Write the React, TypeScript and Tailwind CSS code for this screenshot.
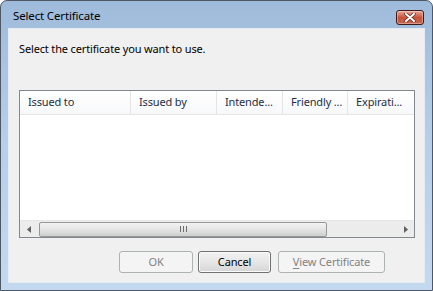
import React from "react";

const font = { fontFamily: '"Noto Sans", "Open Sans", sans-serif', letterSpacing: "-0.15px" };

const columns = [
  { label: "Issued to", w: "w-[111px]" },
  { label: "Issued by", w: "w-[86px]" },
  { label: "Intende...", w: "w-[66px]" },
  { label: "Friendly ...", w: "w-[65px]" },
  { label: "Expirati...", w: "flex-1" },
];

function CloseButton() {
  return (
    <div className="w-[28px] h-[15px] rounded-[3px] border border-[#3f1a1a] bg-gradient-to-b from-[#e9a99a] via-[#c8523b] to-[#c4664f] flex items-center justify-center shadow-[inset_0_0_0_1px_rgba(255,255,255,0.35)]">
      <svg width="12" height="9" viewBox="0 0 12 9">
        <path d="M2 1 L10 8 M10 1 L2 8" stroke="#5a2a24" strokeWidth="3.4" strokeLinecap="round" />
        <path d="M2 1 L10 8 M10 1 L2 8" stroke="#ffffff" strokeWidth="2" strokeLinecap="round" />
      </svg>
    </div>
  );
}

function Button({ label, w, disabled, focus }: { label: React.ReactNode; w: string; disabled?: boolean; focus?: boolean }) {
  return (
    <div
      className={`${w} h-[22px] rounded-[3px] border flex items-center justify-center text-[11px] ${
        disabled
          ? "border-[#adb2b5] bg-[#f4f4f4] text-[#838383]"
          : focus
          ? "border-[#707070] bg-gradient-to-b from-[#f2f2f2] via-[#e6e6e6] to-[#d6d6d6] text-black shadow-[inset_0_0_0_1px_#fbfbfb]"
          : "border-[#707070] bg-[#e8e8e8] text-black"
      }`}
    >
      {label}
    </div>
  );
}

export default function App() {
  return (
    <div
      className="w-[433px] h-[291px] rounded-t-[7px] border border-[#4d5766] bg-gradient-to-b from-[#9fbbdb] via-[#b7cfe9] to-[#c3d9ef] flex flex-col px-[7px] pb-[7px]"
      style={font}
    >
      {/* title bar */}
      <div className="h-[27px] flex items-start justify-between">
        <span className="pl-[5px] pt-[7px] text-[11.5px] text-black leading-[16px]">Select Certificate</span>
        <div className="pt-[9px] pr-[1px]">
          <CloseButton />
        </div>
      </div>

      {/* client area */}
      <div className="flex-1 bg-[#f0f0f0] border border-[#e4ebf3] px-[10px] flex flex-col">
        <p className="mt-[12px] text-[11px] leading-[16px] text-black">Select the certificate you want to use.</p>

        {/* list view */}
        <div className="mt-[33px] h-[148px] w-[396px] border border-[#828790] bg-white flex flex-col">
          <div className="h-[24px] flex bg-gradient-to-b from-white to-[#f7f8fa] border-b border-[#e5e5e5]">
            {columns.map((c) => (
              <div
                key={c.label}
                className={`${c.w} flex items-center pl-[8px] border-r border-[#e5e5e5] text-[11px] text-[#1e2f45] whitespace-nowrap overflow-hidden last:border-r-0`}
              >
                {c.label}
              </div>
            ))}
          </div>
          <div className="flex-1" />
          {/* horizontal scrollbar */}
          <div className="h-[17px] flex items-center bg-[#ececec] border-t border-[#e6e6e6]">
            <div className="w-[17px] h-full flex items-center justify-center">
              <svg width="4" height="7" viewBox="0 0 4 7">
                <path d="M4 0 L0 3.5 L4 7 Z" fill="#606060" />
              </svg>
            </div>
            <div className="ml-[2px] w-[288px] h-[15px] rounded-[2px] border border-[#979797] bg-gradient-to-b from-[#f3f3f3] via-[#e4e4e4] to-[#cfcfcf] flex items-center justify-center">
              <svg width="7" height="6" viewBox="0 0 7 6">
                <path d="M0.5 0 V6 M3.5 0 V6 M6.5 0 V6" stroke="#6c6c6c" strokeWidth="1" />
              </svg>
            </div>
            <div className="flex-1" />
            <div className="w-[17px] h-full flex items-center justify-center">
              <svg width="4" height="7" viewBox="0 0 4 7">
                <path d="M0 0 L4 3.5 L0 7 Z" fill="#606060" />
              </svg>
            </div>
          </div>
        </div>

        {/* buttons */}
        <div className="mt-[13px] flex pl-[100px]">
          <Button label="OK" w="w-[74px]" disabled />
          <div className="w-[5px]" />
          <Button label="Cancel" w="w-[73px]" focus />
          <div className="w-[7px]" />
          <Button
            label={
              <span>
                <span className="underline underline-offset-2">V</span>iew Certificate
              </span>
            }
            w="w-[107px]"
            disabled
          />
        </div>
      </div>
    </div>
  );
}
